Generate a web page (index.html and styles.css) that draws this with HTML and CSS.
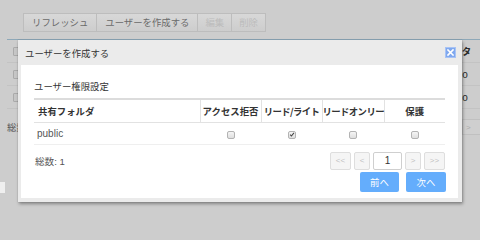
FILE: index.html
```html
<!DOCTYPE html>
<html lang="ja">
<head>
<meta charset="utf-8">
<title>ユーザーを作成する</title>
<link rel="stylesheet" href="styles.css">
</head>
<body>
<div class="page">
  <div class="toolbar">
    <button class="tb">リフレッシュ</button>
    <button class="tb">ユーザーを作成する</button>
    <button class="tb disabled">編集</button>
    <button class="tb disabled">削除</button>
  </div>
  <div class="bg-table">
    <div class="bg-row"><span class="bg-cb"></span><span class="bg-cell head">データ</span></div>
    <div class="bg-row"><span class="bg-cb"></span><span class="bg-cell data">No</span></div>
    <div class="bg-row"><span class="bg-cb"></span><span class="bg-cell data">No</span></div>
  </div>
  <div class="bg-footer"><span class="bg-total">総数</span><span class="bg-pg">&gt;</span></div>
  <div class="bg-white"></div>
</div>

<div class="dialog">
  <div class="dialog-header">
    <span class="dialog-title">ユーザーを作成する</span>
    <svg class="close" width="11" height="11" viewBox="0 0 11 11">
      <rect x="0.5" y="0.5" width="10" height="10" fill="#7fa8ef" stroke="#a8c3f4"/>
      <path d="M3 3 L8 8 M8 3 L3 8" stroke="#ffffff" stroke-width="1.6" stroke-linecap="square"/>
    </svg>
  </div>
  <div class="dialog-body">
    <div class="section-title">ユーザー権限設定</div>
    <table class="perm">
      <colgroup>
        <col class="c-folder"><col class="c-a"><col class="c-b"><col class="c-c"><col class="c-d">
      </colgroup>
      <thead>
        <tr>
          <th class="folder">共有フォルダ</th>
          <th>アクセス拒否</th>
          <th class="tight">リード/ライト</th>
          <th class="tight">リードオンリー</th>
          <th>保護</th>
        </tr>
      </thead>
      <tbody>
        <tr>
          <td class="folder name">public</td>
          <td><span class="cb"></span></td>
          <td><span class="cb checked"><svg width="8" height="8" viewBox="0 0 8 8"><path d="M1.5 4.2 L3.2 6 L6.6 1.8" fill="none" stroke="#444" stroke-width="1.4"/></svg></span></td>
          <td><span class="cb"></span></td>
          <td><span class="cb"></span></td>
        </tr>
      </tbody>
    </table>
    <div class="footer-row">
      <span class="total">総数: 1</span>
      <div class="pager">
        <span class="pg w21">&lt;&lt;</span>
        <span class="pg w16">&lt;</span>
        <span class="pg-input">1</span>
        <span class="pg w16">&gt;</span>
        <span class="pg w21">&gt;&gt;</span>
      </div>
    </div>
    <div class="actions">
      <button class="act">前へ</button>
      <button class="act">次へ</button>
    </div>
  </div>
</div>
</body>
</html>
```

FILE: styles.css
```css
html, body {
  margin: 0;
  padding: 0;
}
body {
  width: 480px;
  height: 240px;
  overflow: hidden;
  background: #cdcdcd;
  font-family: "Liberation Sans", "Noto Sans CJK JP", sans-serif;
  font-size: 9.4px;
  color: #333;
  position: relative;
}
.page {
  display: flex;
  flex-direction: column;
}
.toolbar {
  display: flex;
  padding: 13px 0 0 23px;
}
.tb {
  height: 19px;
  padding: 0 8px;
  margin: 0 -1px 0 0;
  border: 1px solid #bdbdbd;
  background: linear-gradient(#d8d8d8, #cdcdcd);
  font-family: "Noto Sans CJK JP", sans-serif;
  font-size: 9.4px;
  color: #6a6a6a;
  line-height: 17px;
}
.tb.disabled {
  color: #bcbcbc;
  padding: 0 7px;
}
.bg-table {
  margin: 7px 0 0 7px;
  border-top: 1px solid #8ea8b8;
}
.bg-row {
  height: 22px;
  border-bottom: 1px solid #c3c3c3;
  display: flex;
  align-items: center;
}
.bg-cb {
  width: 7px;
  height: 7px;
  margin-left: 6px;
  border: 1px solid #aaa;
  border-radius: 1px;
  background: #c6c6c6;
}
.bg-cell {
  margin-left: auto;
  width: 37px;
  font-family: "Noto Sans CJK JP", sans-serif;
  color: #2a2a2a;
}
.bg-cell.head {
  font-weight: bold;
}
.bg-cell.data {
  font-family: "Liberation Sans", sans-serif;
  font-size: 10px;
  padding-left: 12px;
  width: 25px;
}
.bg-footer {
  margin-top: 9px;
  height: 18px;
  display: flex;
  align-items: center;
  padding-left: 7px;
}
.bg-total {
  font-family: "Noto Sans CJK JP", sans-serif;
  color: #555;
}
.bg-pg {
  margin-left: auto;
  width: 18px;
  height: 16px;
  border: 1px solid #c0c0c0;
  border-right: none;
  background: #cfcfcf;
  color: #aaa;
  font-size: 8px;
  line-height: 16px;
  padding-left: 3px;
  box-sizing: border-box;
}
.bg-white {
  margin-top: 46px;
  width: 5px;
  height: 11px;
  background: #efefef;
}

/* dialog */
.dialog {
  position: absolute;
  left: 18px;
  top: 40px;
  width: 444px;
  height: 162px;
  background: #ebebeb;
  box-shadow: 1px 2px 3px rgba(0, 0, 0, 0.35), 0 0 1px rgba(0, 0, 0, 0.25);
  display: flex;
  flex-direction: column;
}
.dialog-header {
  height: 25px;
  padding: 0 6px 0 7px;
  display: flex;
  align-items: center;
  justify-content: space-between;
}
.dialog-title {
  font-family: "Noto Sans CJK JP", sans-serif;
  font-size: 9.4px;
  color: #333;
}
.close {
  display: block;
}
.dialog-body {
  flex: 1;
  margin: 0 4px 4px 3px;
  background: #fff;
  padding: 14px 13px 0 13px;
}
.section-title {
  font-family: "Noto Sans CJK JP", sans-serif;
  line-height: 14px;
  color: #333;
  margin-bottom: 5px;
}
.perm {
  width: 411px;
  table-layout: fixed;
  border-collapse: collapse;
  border-top: 2px solid #dcdcdc;
}
.c-folder { width: 166px; }
.c-a { width: 61px; }
.c-b { width: 61px; }
.c-c { width: 62px; }
.c-d { width: 61px; }
.perm th {
  height: 22px;
  padding: 0;
  font-family: "Noto Sans CJK JP", sans-serif;
  font-size: 9.4px;
  font-weight: bold;
  color: #333;
  text-align: center;
  white-space: nowrap;
  border-bottom: 1px solid #e2e2e2;
  border-left: 1px solid #e2e2e2;
}
.perm th.tight {
  letter-spacing: -0.6px;
}
.perm th.folder {
  text-align: left;
  padding-left: 4px;
  border-left: none;
}
.perm td {
  height: 21px;
  padding: 0;
  text-align: center;
  border-bottom: 1px solid #efefef;
}
.perm td.name {
  text-align: left;
  padding-left: 3px;
  font-size: 10px;
  color: #555;
}
.cb {
  display: inline-flex;
  align-items: center;
  justify-content: center;
  width: 8px;
  height: 8px;
  box-sizing: border-box;
  border: 1px solid #b3b3b3;
  border-radius: 2px;
  background: linear-gradient(#f5f5f5, #dfdfdf);
  vertical-align: middle;
}
.cb svg {
  display: block;
  width: 7px;
  height: 7px;
}
.footer-row {
  margin-top: 7px;
  display: flex;
  align-items: center;
  justify-content: space-between;
  height: 18px;
}
.total {
  font-family: "Liberation Sans", "Noto Sans CJK JP", sans-serif;
  font-size: 9.6px;
  color: #555;
  padding-left: 1px;
}
.pager {
  display: flex;
  gap: 3px;
}
.pg {
  height: 18px;
  box-sizing: border-box;
  border: 1px solid #dedede;
  border-radius: 2px;
  background: #f5f5f5;
  color: #c2c2c2;
  font-size: 8px;
  line-height: 16px;
  text-align: center;
}
.w21 { width: 21px; }
.w16 { width: 16px; }
.pg-input {
  width: 29px;
  height: 18px;
  box-sizing: border-box;
  border: 1px solid #cfcfcf;
  border-radius: 2px;
  background: #fff;
  font-size: 10px;
  line-height: 16px;
  text-align: center;
  color: #333;
}
.actions {
  margin-top: 2px;
  display: flex;
  justify-content: flex-end;
  gap: 7px;
  padding-right: 0;
}
.act {
  width: 39px;
  height: 20px;
  padding: 0;
  border: none;
  border-radius: 2px;
  background: #64adfc;
  color: #fff;
  font-family: "Noto Sans CJK JP", sans-serif;
  font-size: 9.4px;
}
.act:last-child {
  width: 40px;
  margin-right: -1px;
}
```
